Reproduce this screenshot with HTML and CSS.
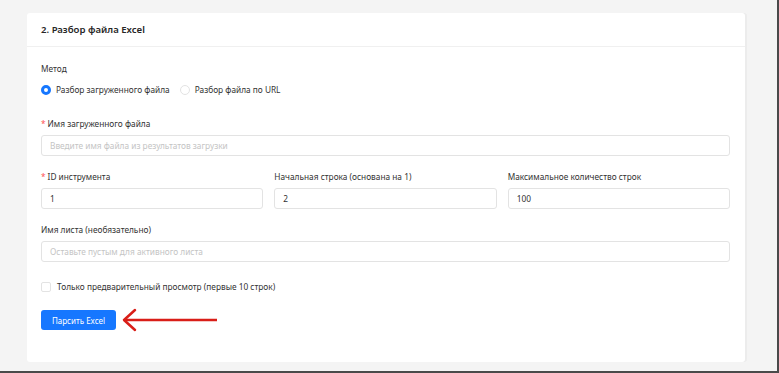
FILE: index.html
```html
<!DOCTYPE html>
<html lang="ru">
<head>
  <meta charset="UTF-8">
  <meta name="viewport" content="width=device-width, initial-scale=1.0">
  <title>Разбор файла Excel</title>
  <link rel="stylesheet" href="styles.css">
</head>
<body>
  <div class="page">
    <div class="card">
      <div class="card-head">2. Разбор файла Excel</div>

      <div class="card-body">
        <div class="field">
          <div class="label group">Метод</div>
          <div class="radios">
            <label class="radio checked"><span class="dot"></span>Разбор загруженного файла</label>
            <label class="radio"><span class="dot"></span>Разбор файла по URL</label>
          </div>
        </div>

        <div class="field">
          <div class="label required">Имя загруженного файла</div>
          <div class="input placeholder">Введите имя файла из результатов загрузки</div>
        </div>

        <div class="field row">
          <div class="col">
            <div class="label required">ID инструмента</div>
            <div class="input">1</div>
          </div>
          <div class="col">
            <div class="label">Начальная строка (основана на 1)</div>
            <div class="input">2</div>
          </div>
          <div class="col">
            <div class="label">Максимальное количество строк</div>
            <div class="input">100</div>
          </div>
        </div>

        <div class="field">
          <div class="label">Имя листа (необязательно)</div>
          <div class="input placeholder">Оставьте пустым для активного листа</div>
        </div>

        <label class="checkbox"><span class="box"></span>Только предварительный просмотр (первые 10 строк)</label>

        <div class="actions">
          <button class="btn-primary">Парсить Excel</button>
          <!-- red pointer arrow -->
          <svg class="arrow" width="100" height="24" viewBox="0 0 100 24">
            <path d="M98 12 H6" stroke="#d91e18" stroke-width="2.5" fill="none"/>
            <path d="M16 2 L5 12 L16 22" stroke="#d91e18" stroke-width="2.5" fill="none" stroke-linecap="round" stroke-linejoin="round"/>
          </svg>
        </div>
      </div>
    </div>
  </div>
</body>
</html>
```

FILE: styles.css
```css
body {
  margin: 0;
  font-family: 'Noto Sans', 'Open Sans', sans-serif;
  color: #333;
  background: #f4f4f4;
}

/* screenshot frame */
.page {
  box-sizing: border-box;
  width: 779px;
  height: 373px;
  padding: 13px 32px 0 27px;
  border-right: 2px solid #4a4a4a;
  border-bottom: 2px solid #4a4a4a;
  overflow: hidden;
}

.card {
  width: 718px;
  height: 349px;
  background: #fff;
  border-radius: 3px;
  box-shadow: 2px 0 0 #ececec;
}

.card-head {
  height: 34px;
  box-sizing: border-box;
  padding: 10px 14px 0;
  font-size: 9.6px;
  font-weight: 600;
  color: #262626;
  border-bottom: 1px solid #f0f0f0;
}

.card-body {
  padding: 16px 15px 0 14px;
}

.field {
  margin-bottom: 15px;
}

.label {
  font-size: 8.3px;
  line-height: 12px;
  margin-bottom: 5px;
  color: #333;
}

.label.group {
  margin-bottom: 9px;
}

.label.required::before {
  content: '*';
  color: #ff4d4f;
  margin-right: 2px;
}

.radios {
  display: flex;
  gap: 10px;
  font-size: 8.3px;
  line-height: 12px;
  margin-bottom: 22px;
}

.radio {
  display: flex;
  align-items: center;
  gap: 5px;
}

.radio .dot {
  box-sizing: border-box;
  width: 10px;
  height: 10px;
  border-radius: 50%;
  border: 1px solid #e3e3e3;
  background: #fff;
}

.radio.checked .dot {
  border: 3px solid #1677ff;
}

.input {
  box-sizing: border-box;
  height: 21px;
  padding: 4px 8px;
  font-size: 8.3px;
  line-height: 12px;
  border: 1px solid #e3e3e3;
  border-radius: 3px;
  color: #333;
}

.input.placeholder {
  color: #c4c4c4;
}

.row {
  display: grid;
  grid-template-columns: 1fr 1fr 1fr;
  gap: 11px;
}

.checkbox {
  display: flex;
  align-items: center;
  gap: 6px;
  font-size: 8.3px;
  line-height: 12px;
  margin-top: 19px;
}

.checkbox .box {
  box-sizing: border-box;
  width: 10px;
  height: 10px;
  border: 1px solid #e3e3e3;
  border-radius: 2px;
}

.actions {
  display: flex;
  align-items: center;
  gap: 3px;
  margin-top: 15px;
}

.btn-primary {
  height: 20px;
  width: 75px;
  padding: 0;
  font-family: inherit;
  font-size: 8px;
  color: #fff;
  background: #1677ff;
  border: none;
  border-radius: 3px;
}
```
